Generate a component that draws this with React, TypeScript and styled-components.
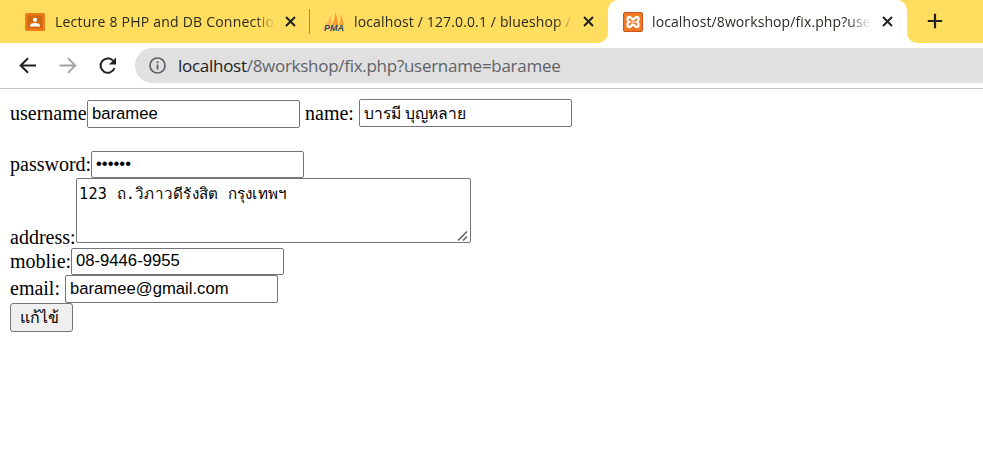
import React from "react";
import styled, { createGlobalStyle } from "styled-components";

const Global = createGlobalStyle`
  * { box-sizing: border-box; }
  html, body { margin: 0; background: #fff; overflow: hidden; }
`;

const ui = `"Open Sans", "Noto Sans", sans-serif`;

const Window = styled.div`
  width: 983px;
  height: 453px;
  overflow: hidden;
  background: #fff;
`;

const TabStrip = styled.div`
  display: flex;
  height: 43px;
  background: linear-gradient(#ffdd5e 50%, #fff 50%);
`;

const Tab = styled.div<{ $width: number; $pad: number; $active?: boolean; $before?: boolean }>`
  display: flex;
  align-items: center;
  flex: none;
  width: ${(p) => p.$width}px;
  padding-left: ${(p) => p.$pad}px;
  height: 43px;
  background: ${(p) => (p.$active ? "#fff" : "#ffdd5e")};
  border-radius: ${(p) => (p.$active ? "10px 10px 0 0" : p.$before ? "0 0 10px 0" : "0")};
`;

const DividerCell = styled.div`
  width: 1px;
  height: 43px;
  padding-top: 9px;
  background: #ffdd5e;
`;

const Divider = styled.div`
  width: 1px;
  height: 25px;
  background: #a58f3d;
`;

const TabTitle = styled.div<{ $gap: number; $width: number; $spacing: number; $fade: number }>`
  flex: none;
  width: ${(p) => p.$width}px;
  margin-left: ${(p) => p.$gap}px;
  white-space: nowrap;
  font: 14px/22px ${ui};
  letter-spacing: ${(p) => p.$spacing}px;
  color: #2b2a22;
  mask-image: linear-gradient(to right, #000 calc(100% - ${(p) => p.$fade}px), transparent);
`;

const CloseIcon = styled.svg<{ $gap: number }>`
  flex: none;
  width: 11px;
  height: 11px;
  margin-left: ${(p) => p.$gap}px;
`;

const NewTabArea = styled.div`
  flex: 1;
  height: 43px;
  padding: 13px 0 0 20px;
  background: #ffdd5e;
  border-radius: 0 0 0 10px;
`;

const Toolbar = styled.div`
  display: flex;
  align-items: center;
  height: 46px;
  padding: 0 0 0 18px;
  border-bottom: 1px solid #c9c9c9;
`;

const NavIcon = styled.svg`
  flex: none;
  width: 20px;
  height: 20px;
  margin-right: 20px;
`;

const AddressBar = styled.div`
  display: flex;
  align-items: center;
  flex: 1;
  height: 35px;
  margin: 0 -20px 0 -3px;
  padding-left: 14px;
  border-radius: 18px;
  background: #e0e0e0;
`;

const Url = styled.div`
  margin-left: 12px;
  white-space: nowrap;
  font: 17px/26px ${ui};
  letter-spacing: -0.28px;
  color: #5f6368;
`;

const Host = styled.span`
  color: #202124;
`;

const Form = styled.form`
  padding: 10px 0 0 10px;
  font: 20px/23px "Liberation Serif", serif;
  color: #000;
`;

const Row = styled.div<{ $height: number }>`
  display: flex;
  align-items: flex-start;
  height: ${(p) => p.$height}px;
`;

const Label = styled.label<{ $width: number; $top: number }>`
  flex: none;
  width: ${(p) => p.$width}px;
  padding-top: ${(p) => p.$top}px;
  white-space: nowrap;
`;

const Field = styled.input<{ $top?: number; $height: number; $size?: number; $raise?: boolean }>`
  flex: none;
  width: 213px;
  height: ${(p) => p.$height}px;
  margin: ${(p) => p.$top ?? 0}px 0 0;
  padding: 1px 4px ${(p) => (p.$raise ? 3 : 1)}px;
  border: 1px solid #767676;
  border-radius: 2px;
  outline: 0;
  background: #fff;
  font: ${(p) => p.$size ?? 16.67}px "Liberation Sans", sans-serif;
  color: #000;
`;

const AddressBox = styled.div`
  position: relative;
  width: 395px;
  height: 65px;
`;

const Address = styled.textarea`
  display: block;
  width: 395px;
  height: 65px;
  margin: 0;
  padding: 3px 3px 2px 2px;
  border: 1px solid #767676;
  border-radius: 2px;
  outline: 0;
  resize: none;
  font: 15.2px/24px "DejaVu Sans Mono", monospace;
  letter-spacing: 0.24px;
  color: #000;
`;

const Grip = styled.svg`
  position: absolute;
  right: 3px;
  bottom: 2px;
  width: 11px;
  height: 11px;
`;

const Submit = styled.button`
  width: 63px;
  height: 29px;
  padding: 0 4px 1px 0;
  border: 1px solid #767676;
  border-radius: 3px;
  background: #efefef;
  font: 16px "Liberation Sans", sans-serif;
  color: #000;
`;

const Close = ({ gap }: { gap: number }) => (
  <CloseIcon $gap={gap} viewBox="0 0 11 11">
    <path d="M1 1l9 9M10 1l-9 9" stroke="#202124" strokeWidth="2" />
  </CloseIcon>
);

const ClassroomIcon = () => (
  <svg width="20" height="18" viewBox="0 0 20 18">
    <rect width="20" height="18" rx="1.5" fill="#ee7b17" />
    <rect x="2.5" y="2.5" width="15" height="13" fill="#d0680f" />
    <circle cx="10" cy="6.800" r="2.100" fill="#fff" />
    <path d="M5 13.500v-1c0-1.700 2.500-2.500 5-2.500s5 .8 5 2.500v1z" fill="#fff" />
  </svg>
);

const PmaIcon = () => (
  <svg width="21" height="20" viewBox="0 0 21 20">
    <path d="M7 2v11H1C4 10 6 7 7 2z" fill="#fbb35a" />
    <path d="M11 0c2 4 3.500 9 3 13H7.500c3-4 4-8 3.500-13z" fill="#f99a2c" />
    <path d="M16 2c2 3 4 7 4 11h-5c1.500-3 1.800-7 1-11z" fill="#f9a53b" />
    <text x="0" y="18.800" textLength="20" lengthAdjust="spacingAndGlyphs" fontFamily="Liberation Sans" fontWeight="bold" fontStyle="italic" fontSize="9" fill="#33406f">PMA</text>
  </svg>
);

const XamppIcon = () => (
  <svg width="20" height="20" viewBox="0 0 20 20">
    <rect x=".5" y=".5" width="19" height="19" rx="1.500" fill="#f37623" stroke="#c2581a" />
    <path d="M6 10C3.800 9 3.800 5 6.500 5c1.800 0 1.800 2.500 3.500 2.500S11.700 5 13.500 5C16.200 5 16.200 9 14 10c2.200 1 2.200 5-.5 5-1.800 0-1.800-2.500-3.500-2.500S8.300 15 6.500 15C3.800 15 3.800 11 6 10z" fill="none" stroke="#fff" strokeWidth="2.300" />
    <path d="M8.500 10h3" stroke="#fff" strokeWidth="1" />
  </svg>
);

export default function App() {
  return (
    <Window>
      <Global />
      <TabStrip>
        <Tab $width={309} $pad={25}>
          <ClassroomIcon />
          <TabTitle $gap={10} $width={220} $spacing={0.22} $fade={20}>Lecture 8 PHP and DB Connectio</TabTitle>
          <Close gap={10} />
        </Tab>
        <DividerCell>
          <Divider />
        </DividerCell>
        <Tab $width={298} $pad={14} $before>
          <PmaIcon />
          <TabTitle $gap={9} $width={219} $spacing={0.14} $fade={18}>localhost / 127.0.0.1 / blueshop /</TabTitle>
          <Close gap={10} />
        </Tab>
        <Tab $width={299} $pad={15} $active>
          <XamppIcon />
          <TabTitle $gap={9} $width={219} $spacing={0.1} $fade={24}>localhost/8workshop/fix.php?use</TabTitle>
          <Close gap={11} />
        </Tab>
        <NewTabArea>
          <svg width="16" height="16" viewBox="0 0 16 16">
            <path d="M8 .8v14.400M.8 8h14.400" stroke="#202124" strokeWidth="2.200" />
          </svg>
        </NewTabArea>
      </TabStrip>
      <Toolbar>
        <NavIcon viewBox="0 0 20 20">
          <path d="M18 9.500H3M10 2.200L2.700 9.500l7.300 7.300" fill="none" stroke="#202124" strokeWidth="2" />
        </NavIcon>
        <NavIcon viewBox="0 0 20 20">
          <path d="M1.500 9.500H17M10 2.200l7.300 7.300-7.300 7.300" fill="none" stroke="#a0a1a3" strokeWidth="1.800" />
        </NavIcon>
        <NavIcon viewBox="0 0 20 20">
          <path d="M16.500 12.200A7.200 7.200 0 1 1 15 4.600" fill="none" stroke="#202124" strokeWidth="2" />
          <path d="M18 1.500v7h-7z" fill="#202124" />
        </NavIcon>
        <AddressBar>
          <svg width="17" height="17" viewBox="0 0 17 17">
            <circle cx="8.500" cy="8.500" r="7.500" fill="none" stroke="#5f6368" strokeWidth="1.700" />
            <path d="M8.500 7.500v5M8.500 4.300v1.900" stroke="#5f6368" strokeWidth="1.800" />
          </svg>
          <Url><Host>localhost</Host>/8workshop/fix.php?username=baramee</Url>
        </AddressBar>
      </Toolbar>
      <Form>
        <Row $height={52}>
          <Label $width={77} $top={3}>username</Label>
          <Field $top={1} $height={28} defaultValue="baramee" />
          <Label $width={59} $top={3}>&nbsp;name:</Label>
          <Field $height={28} $size={15.7} defaultValue="บารมี บุญหลาย" />
        </Row>
        <Row $height={27}>
          <Label $width={81} $top={2}>password:</Label>
          <Field $height={27} $raise type="password" defaultValue="123456" />
        </Row>
        <Row $height={70}>
          <Label $width={66} $top={48}>address:</Label>
          <AddressBox>
            <Address defaultValue="123 ถ.วิภาวดีรังสิต กรุงเทพฯ" />
            <Grip viewBox="0 0 11 11">
              <path d="M1 10.500L10 1.500M6 10.500l4-4" stroke="#5c5c5c" strokeWidth="1.500" />
            </Grip>
          </AddressBox>
        </Row>
        <Row $height={27}>
          <Label $width={61} $top={2}>moblie:</Label>
          <Field $height={27} $raise defaultValue="08-9446-9955" />
        </Row>
        <Row $height={28}>
          <Label $width={55} $top={2}>email:</Label>
          <Field $height={28} defaultValue="baramee@gmail.com" />
        </Row>
        <Submit type="button">แก้ไข้</Submit>
      </Form>
    </Window>
  );
}
